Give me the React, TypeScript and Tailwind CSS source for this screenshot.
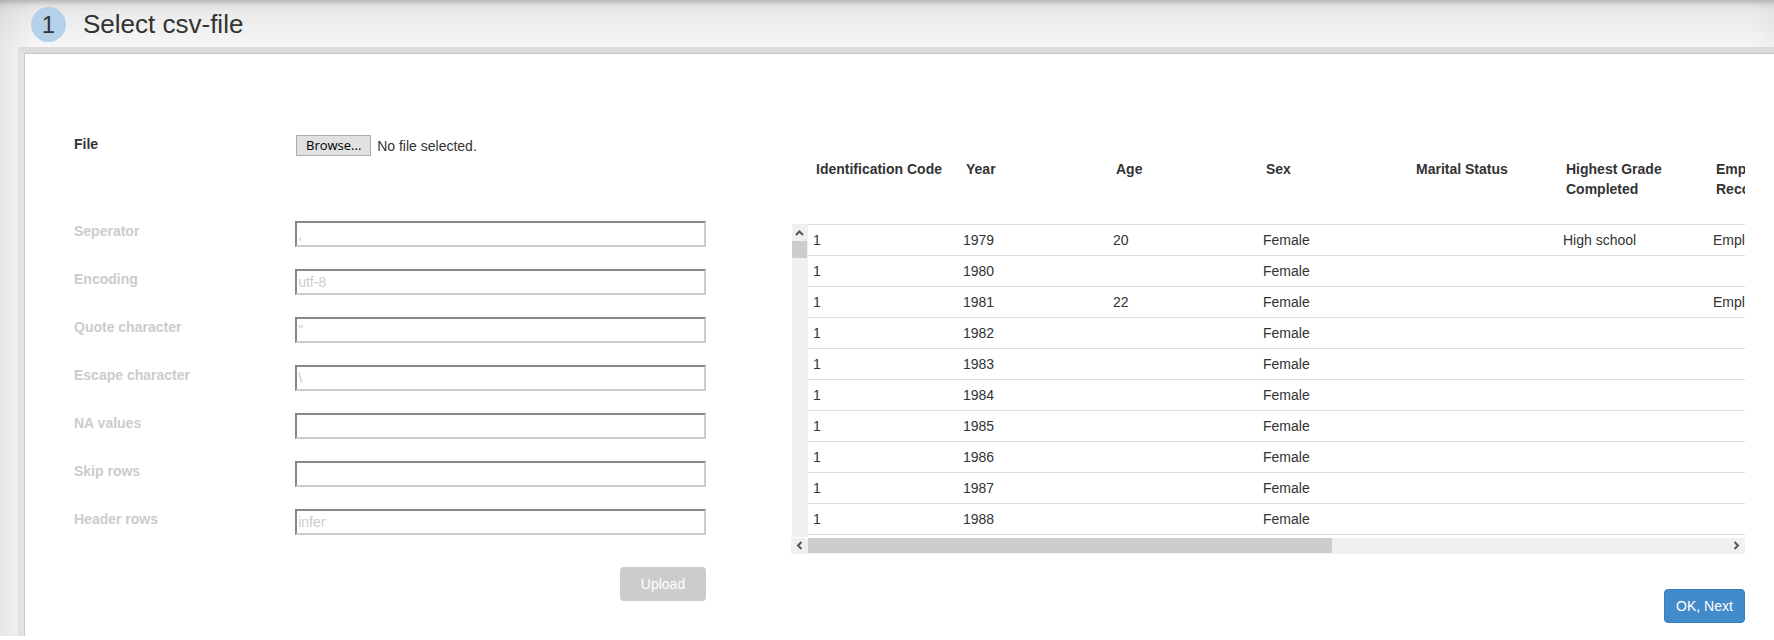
import { useRef, useState } from "react";

type Option = { id: string; label: string; value: string };

const options: Option[] = [
  { id: "separator", label: "Seperator", value: "," },
  { id: "encoding", label: "Encoding", value: "utf-8" },
  { id: "quote", label: "Quote character", value: '"' },
  { id: "escape", label: "Escape character", value: "\\" },
  { id: "na", label: "NA values", value: "" },
  { id: "skip", label: "Skip rows", value: "" },
  { id: "header", label: "Header rows", value: "infer" },
];

const columns = [
  "Identification Code",
  "Year",
  "Age",
  "Sex",
  "Marital Status",
  "Highest Grade Completed",
  "Employment Status Recode",
];

const rows: string[][] = [
  ["1", "1979", "20", "Female", "", "High school", "Employed"],
  ["1", "1980", "", "Female", "", "", ""],
  ["1", "1981", "22", "Female", "", "", "Employed"],
  ["1", "1982", "", "Female", "", "", ""],
  ["1", "1983", "", "Female", "", "", ""],
  ["1", "1984", "", "Female", "", "", ""],
  ["1", "1985", "", "Female", "", "", ""],
  ["1", "1986", "", "Female", "", "", ""],
  ["1", "1987", "", "Female", "", "", ""],
  ["1", "1988", "", "Female", "", "", ""],
];

function Arrow({ points }: { points: string }) {
  return (
    <svg viewBox="0 0 9 9" className="size-[9px]" fill="none" stroke="#555" strokeWidth="2" aria-hidden="true">
      <polyline points={points} />
    </svg>
  );
}

function StepHeader() {
  return (
    <header className="flex h-[47px] shrink-0 items-start gap-[17px] bg-[linear-gradient(to_right,rgba(0,0,0,0.06),transparent_36px),linear-gradient(to_left,rgba(0,0,0,0.03),transparent_24px),linear-gradient(to_bottom,#b8b8b8,#dedede_5px,#ebebeb_12px,#f6f6f6)] pt-[7px] pl-[31px]">
      <span className="flex size-[35px] items-center justify-center rounded-full bg-[#b5d1ea] text-2xl">1</span>
      <h1 className="text-[26px] leading-[34px]">Select csv-file</h1>
    </header>
  );
}

function FileField() {
  const picker = useRef<HTMLInputElement>(null);
  const [name, setName] = useState("No file selected.");
  return (
    <div className="grid grid-cols-[35%_65%]">
      <label htmlFor="file" className="font-bold leading-5">
        File
      </label>
      <div className="flex h-[23px] items-center gap-[6px] pl-px">
        <button
          type="button"
          onClick={() => picker.current?.click()}
          className="h-[21px] w-[75px] border border-[#adadad] bg-[#e1e1e1] font-['Open_Sans',sans-serif] text-[13px] leading-[19px] text-black"
        >
          Browse...
        </button>
        <span>{name}</span>
        <input
          ref={picker}
          id="file"
          type="file"
          accept=".csv"
          className="hidden"
          onChange={(e) => setName(e.target.files?.[0]?.name ?? "No file selected.")}
        />
      </div>
    </div>
  );
}

function ImportForm() {
  return (
    <form className="flex flex-col pt-[81px]" onSubmit={(e) => e.preventDefault()}>
      <FileField />
      <div className="mt-16 flex flex-col gap-[22px]">
        {options.map((o) => (
          <div key={o.id} className="grid grid-cols-[35%_65%]">
            <label htmlFor={o.id} className="font-bold leading-5 text-[#ccc]">
              {o.label}
            </label>
            <input
              id={o.id}
              type="text"
              defaultValue={o.value}
              disabled
              className="h-[26px] w-full border-2 border-t-[#888] border-r-[#ccc] border-b-[#ccc] border-l-[#888] bg-white px-px text-[#ccc]"
            />
          </div>
        ))}
      </div>
      <button type="submit" disabled className="mt-8 h-[34px] w-[86px] self-end rounded bg-[#ccc] text-white">
        Upload
      </button>
    </form>
  );
}

function Preview() {
  return (
    <section className="flex min-w-0 flex-col pt-[106px]">
      <div className="flex pl-px">
        <div className="mt-[65px] mb-px flex w-4 shrink-0 flex-col items-start bg-[#f0f0f0]">
          <button type="button" aria-label="Scroll up" className="flex h-[17px] w-[15px] items-center justify-center">
            <Arrow points="1,7 4.5,3.5 8,7" />
          </button>
          <div className="h-[17px] w-[15px] bg-[#cdcdcd]" />
        </div>
        <div className="min-w-0 flex-1 overflow-hidden pb-[3px]">
          <table className="w-[1050px] table-fixed border-collapse text-left">
            <thead>
              <tr className="h-[65px] align-top">
                {columns.map((c) => (
                  <th key={c} className="pl-2 leading-5 font-bold">
                    {c}
                  </th>
                ))}
              </tr>
            </thead>
            <tbody>
              {rows.map((row) => (
                <tr key={row[1]} className="h-[31px] border-y border-[#ddd]">
                  {row.map((cell, i) => (
                    <td key={columns[i]} className="py-[5px] pl-[5px] leading-5">
                      {cell}
                    </td>
                  ))}
                </tr>
              ))}
            </tbody>
          </table>
        </div>
      </div>
      <div className="flex h-4 bg-[#f0f0f0]">
        <button type="button" aria-label="Scroll left" className="flex w-[17px] items-center justify-center">
          <Arrow points="6.5,1 3,4.5 6.5,8" />
        </button>
        <div className="flex-1">
          <div className="h-[15px] w-[57%] bg-[#cdcdcd]" />
        </div>
        <button type="button" aria-label="Scroll right" className="flex w-[17px] items-center justify-center">
          <Arrow points="2.5,1 6,4.5 2.5,8" />
        </button>
      </div>
      <button
        type="button"
        className="mt-[35px] h-[34px] w-[81px] self-end rounded border border-[#357ebd] bg-[#428bca] text-white"
      >
        OK, Next
      </button>
    </section>
  );
}

export default function App() {
  return (
    <div className="flex min-h-screen flex-col bg-white pb-1 font-['Liberation_Sans',Arial,sans-serif] text-sm text-[#333]">
      <StepHeader />
      <div className="flex flex-1 bg-linear-to-r from-[#e6e6e6] to-[#efefef] to-[18px] pl-[18px]">
        <main className="grid flex-1 grid-cols-[632fr_954fr] gap-x-[85px] border-t-6 border-l-6 border-t-[#dcdcdc] border-l-[#e2e2e2] bg-white pr-[29px] pl-[50px] shadow-[inset_1px_1px_0_#c8c8c8]">
          <ImportForm />
          <Preview />
        </main>
      </div>
    </div>
  );
}
